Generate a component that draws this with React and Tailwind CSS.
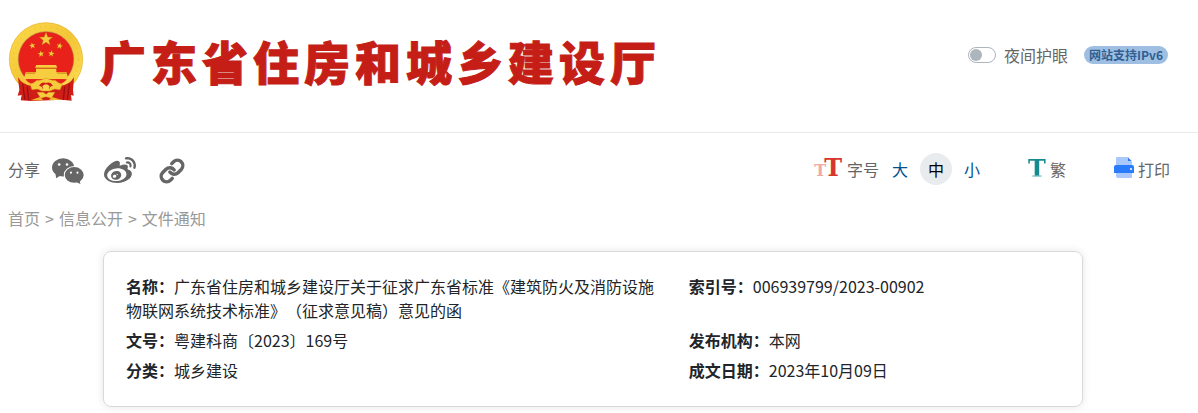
import { useState } from "react";
import { FaWeibo } from "react-icons/fa";
import { Link } from "lucide-react";

const crumbs = ["首页", "信息公开", "文件通知"];
const sizes = ["大", "中", "小"];

const fields = [
  { label: "名称：", value: "广东省住房和城乡建设厅关于征求广东省标准《建筑防火及消防设施物联网系统技术标准》（征求意见稿）意见的函" },
  { label: "索引号：", value: "006939799/2023-00902" },
  { label: "文号：", value: "粤建科商〔2023〕169号" },
  { label: "发布机构：", value: "本网" },
  { label: "分类：", value: "城乡建设" },
  { label: "成文日期：", value: "2023年10月09日" },
];

const STAR = "M0-10 2.6-3.2 9.5-3.1 4 1.2 5.9 8.1 0 4.1-5.9 8.1-4 1.2-9.5-3.1-2.6-3.2Z";

function Emblem() {
  return (
    <svg viewBox="24 36 228 240" className="h-20 w-[76px] shrink-0" role="img" aria-label="国徽">
      <defs>
        <linearGradient id="gold" x1="0" y1="0" x2="1" y2="1">
          <stop offset="0" stopColor="#fbd84a" />
          <stop offset="0.5" stopColor="#f3c636" />
          <stop offset="1" stopColor="#fbdc52" />
        </linearGradient>
      </defs>
      <circle cx="138" cy="148" r="97" fill="none" stroke="url(#gold)" strokeWidth="27" />
      <circle cx="138" cy="148" r="110" fill="none" stroke="#e0a626" strokeWidth="1.5" />
      <circle cx="138" cy="148" r="98" fill="none" stroke="#dca323" strokeWidth="3" strokeDasharray="4 13" opacity="0.4" />
      <circle cx="138" cy="148" r="83" fill="#e8211b" stroke="#b86a10" strokeWidth="2" />
      <path d="M54 202Q66 224 97 228L138 238 179 228Q210 224 222 202L219 240 221 257 213 255 215 272 184 269 92 273 62 271 65 255 53 257 58 240Z" fill="#d01d17" />
      <path d="M68 222 75 270M82 230 86 270M208 222 202 270M194 230 190 270" stroke="#9d0f0d" strokeWidth="4" fill="none" />
      <g fill="#f6cc3e" stroke="#b67710" strokeWidth="0.6">
        <path d={STAR} transform="translate(138 88) scale(2.1)" />
        <path d={STAR} transform="translate(97 107) rotate(-12)" />
        <path d={STAR} transform="translate(179 108) rotate(12)" />
        <path d={STAR} transform="translate(123 132) rotate(-8)" />
        <path d={STAR} transform="translate(154 131) rotate(8)" />
      </g>
      <path d="M109 165H168L172 173H105ZM108 177H169V187H200L205 208H71L77 187H108Z" fill="#f7ce3f" />
      <path d="M108 175H169M77 190H105M172 190H201" stroke="#c98a17" strokeWidth="2.5" />
      <path d="M76 208H201Q191 219 181 223H96Q84 219 76 208Z" fill="#e8211b" />
      <path d="M90 222Q102 220 111 211 122 213 138 204 154 213 165 211 174 220 187 222L180 239 164 237 149 243 127 243 112 237 96 239Z" fill="#f6cb3d" stroke="#d49a20" strokeWidth="1.5" />
      <path d="M117 228Q125 214 138 219 151 214 159 228 150 226 148 236H128Q126 226 117 228Z" fill="#d01d17" />
      <path d="M127 229Q138 216 149 229L145 240H131Z" fill="#f8d54c" />
      <path d="M111 247 130 247 138 253 146 247 165 247 154 265 138 260 122 265Z" fill="#f6cb3f" stroke="#c98a17" strokeWidth="1" />
      <path d="M92 271 120 261 130 271ZM184 269 156 261 146 271Z" fill="#efb92e" />
    </svg>
  );
}

function Wechat() {
  return (
    <svg viewBox="20 22 98 82" className="size-8" fill="currentColor" aria-hidden="true">
      <path d="M30 68 33 85 47 76Z" />
      <ellipse cx="54" cy="52" rx="34" ry="28" />
      <ellipse cx="88" cy="75" rx="32" ry="27" fill="#fff" />
      <path d="M92 96 107 103 105 90Z" />
      <ellipse cx="88" cy="75" rx="29" ry="24" />
      <g fill="#fff">
        <circle cx="42" cy="43" r="4" />
        <circle cx="66" cy="43" r="4" />
        <circle cx="78" cy="68" r="3.2" />
        <circle cx="98" cy="68" r="3.2" />
      </g>
    </svg>
  );
}

function Printer() {
  return (
    <svg viewBox="0 0 20 21" className="h-[21px] w-5" aria-hidden="true">
      <path d="M3 0H13.5L18 4.5V20Q18 21 17 21H4Q2 21 2 19V1Q2 0 3 0Z" fill="#a9c9fd" />
      <path d="M14 0.5 17.5 4H14Z" fill="#2b78f5" />
      <path d="M2 8H18Q20 8 20 10V16H0V10Q0 8 2 8Z" fill="#2b7cfb" />
      <circle cx="17" cy="12" r="1" fill="#fff" />
    </svg>
  );
}

export default function App() {
  const [size, setSize] = useState("中");
  const [night, setNight] = useState(false);

  return (
    <div className="bg-white font-['Noto_Sans_CJK_SC',sans-serif] text-base leading-6 text-[#212529] [text-spacing-trim:space-all]">
      <header className="flex items-start justify-between border-b border-[#e9e9e9] pt-[22px] pr-[30px] pb-[30px] pl-2">
        <div className="flex items-center gap-4">
          <Emblem />
          <h1 className="pb-1 text-[46px] leading-[60px] font-black tracking-[5px] whitespace-nowrap text-[#c41e17] [-webkit-text-stroke:1px_#c41e17]">广东省住房和城乡建设厅</h1>
        </div>
        <div className="flex h-[66px] items-center gap-4 whitespace-nowrap">
          <label className="flex items-center gap-2 text-[#666]">
            <input
              type="checkbox"
              role="switch"
              checked={night}
              onChange={(e) => setNight(e.target.checked)}
              className="flex h-4 w-7 appearance-none items-center rounded-full border border-[#adb5bd] bg-white px-px before:size-3 before:rounded-full before:bg-[#adb5bd] checked:justify-end"
            />
            夜间护眼
          </label>
          <span className="rounded-full bg-[#9fbfe2] px-[5px] text-xs leading-[18px] font-bold text-[#2f5f93]">网站支持IPv6</span>
        </div>
      </header>

      <div className="mt-5 flex h-8 items-center justify-between pr-7 pl-2 whitespace-nowrap text-[#666]">
        <div className="flex items-center gap-3">
          <span>分享</span>
          <div className="flex items-center gap-5 pt-1">
            <a href="#wechat" aria-label="微信"><Wechat /></a>
            <a href="#weibo" aria-label="微博"><FaWeibo className="size-8" /></a>
            <a href="#link" aria-label="复制链接" className="flex w-8 justify-center"><Link size={26} strokeWidth={3.2} /></a>
          </div>
        </div>

        <div className="flex items-center">
          <div className="flex items-center gap-[5px]">
            <span aria-hidden="true" className="flex items-baseline font-['DejaVu_Serif',serif] font-bold">
              <span className="-mr-0.5 text-base text-[#efaaa8]">T</span>
              <span className="text-2xl leading-6 text-[#d8352f]">T</span>
            </span>
            <span>字号</span>
            <div className="flex items-center gap-1">
              {sizes.map((s) => (
                <button
                  key={s}
                  type="button"
                  onClick={() => setSize(s)}
                  className={s === size ? "size-8 rounded-full bg-[#e9ecef] text-black" : "size-8 rounded-full text-[#00508f]"}
                >
                  {s}
                </button>
              ))}
            </div>
          </div>
          <button type="button" className="ml-10 flex items-center gap-1">
            <span aria-hidden="true" className="bg-linear-to-b from-[#158a91] from-75% to-[#9bd5d5] to-80% bg-clip-text font-['DejaVu_Serif',serif] text-2xl leading-6 font-bold text-transparent">T</span>
            繁
          </button>
          <button type="button" className="ml-12 flex items-center gap-1">
            <span className="pb-1"><Printer /></span>
            打印
          </button>
        </div>
      </div>

      <nav className="mt-[21px] flex gap-[5px] pl-2 text-[#999]">
        {crumbs.map((c, i) => (
          <span key={c} className="flex gap-[5px]">
            {i > 0 && <span>&gt;</span>}
            <a href={"#" + i}>{c}</a>
          </span>
        ))}
      </nav>

      <main className="mt-[21px] pr-3 pb-1.5">
        <dl className="mx-auto grid max-w-[980px] grid-cols-[3fr_2fr] gap-y-1.5 rounded-lg border border-[#d9d9d9] pt-[22px] pr-[18px] pb-6 pl-[22px] shadow-[0_0_8px_rgba(0,0,0,0.1)]">
          {fields.map((f) => (
            <div key={f.label} className="pr-5">
              <dt className="inline font-bold">{f.label}</dt>
              <dd className="inline">{f.value}</dd>
            </div>
          ))}
        </dl>
      </main>
    </div>
  );
}
